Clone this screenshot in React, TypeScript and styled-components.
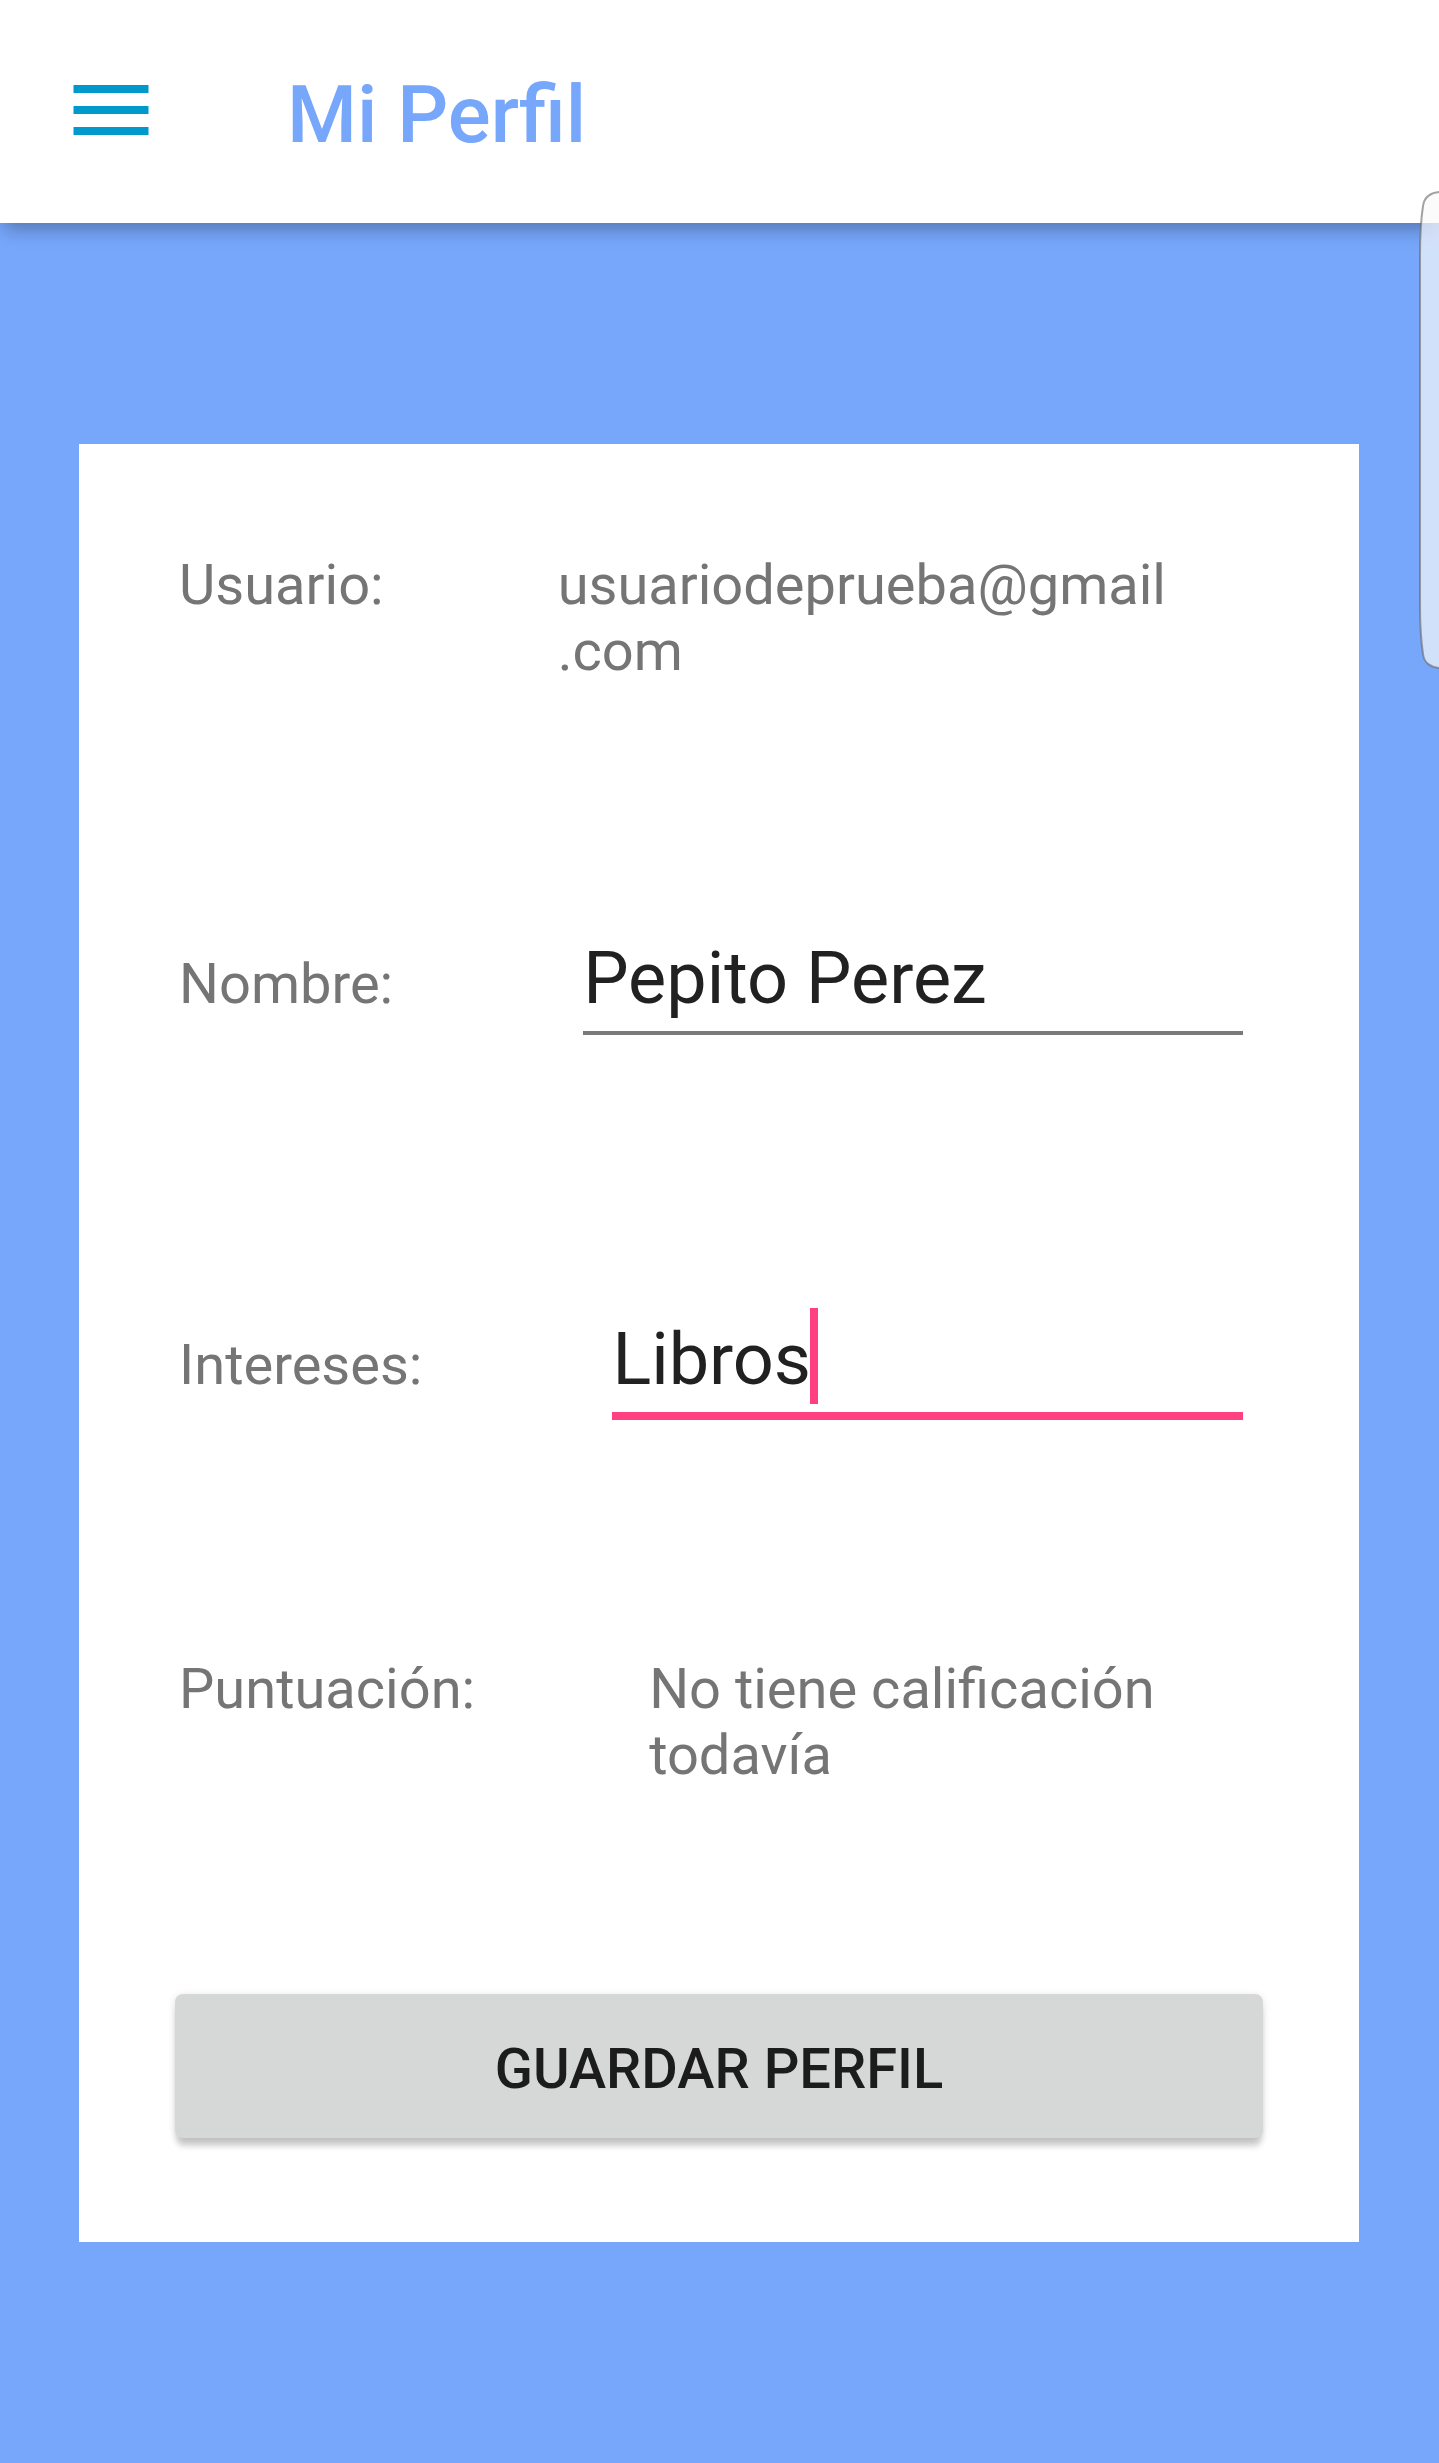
import React, { useLayoutEffect, useRef, useState } from 'react';
import styled, { createGlobalStyle } from 'styled-components';

const GlobalStyle = createGlobalStyle`
  * { box-sizing: border-box; }
  body { margin: 0; background: #77a7fb; font-family: Roboto, sans-serif; }
`;
const Page = styled.div`
  position: relative;
  min-height: 100vh;
  background: #77a7fb;
  overflow: hidden;
`;
const Toolbar = styled.header`
  display: flex;
  align-items: center;
  height: 223px;
  padding: 0 64px 3px;
  gap: 127px;
  background: #fff;
  box-shadow: 0 10px 18px -4px rgba(0, 0, 0, 0.3);
`;
const MenuButton = styled.button`
  display: flex;
  padding: 0;
  border: 0;
  background: none;
`;
const Title = styled.h1`
  margin: 0;
  padding-top: 10px;
  color: #77a7fb;
  font-size: 80px;
  line-height: 96px;
  font-weight: 500;
`;
const Card = styled.main`
  margin: 221px 80px 0 79px;
  padding: 108px 96px 104px;
  background: #fff;
`;
const Form = styled.form`
  display: flex;
  flex-direction: column;
`;
const Row = styled.div<{ $gap: number; $height: number }>`
  display: flex;
  align-items: flex-start;
  gap: ${(p) => p.$gap}px;
  min-height: ${(p) => p.$height}px;
  padding-left: 4px;
`;
const Label = styled.label`
  color: #757575;
  font-size: 56px;
  line-height: 66px;
`;
const Value = styled.output`
  flex: 1;
  color: #757575;
  font-size: 56px;
  line-height: 66px;
`;
const FieldBox = styled.div`
  position: relative;
  display: flex;
  flex: 1;
  min-width: 0;
  margin: -24px 20px 0 0;
`;
const Field = styled.input<{ $active?: boolean }>`
  box-sizing: content-box;
  width: 100%;
  min-width: 0;
  height: 102px;
  padding: 0 0 2px;
  border: 0;
  border-bottom: ${(p) => (p.$active ? '8px solid #ff4081' : '4px solid #7a7a7a')};
  border-radius: 0;
  outline: 0;
  background: transparent;
  caret-color: ${(p) => (p.$active ? 'transparent' : '#ff4081')};
  color: #212121;
  font: 400 72px/84px Roboto, sans-serif;
`;
const Caret = styled.span`
  position: absolute;
  top: 0;
  width: 8px;
  height: 96px;
  background: #ff4081;
  pointer-events: none;
`;
const SaveButton = styled.button`
  height: 144px;
  padding: 6px 0 0;
  border: 0;
  border-radius: 8px;
  background: #d6d8d7;
  color: #1c1c1c;
  box-shadow: 0 10px 6px -2px rgba(0, 0, 0, 0.18), 0 2px 8px rgba(0, 0, 0, 0.12);
  font: 500 56px/66px Roboto, sans-serif;
  text-transform: uppercase;
`;
const EdgeHandle = styled.svg`
  position: absolute;
  top: 191px;
  right: 0;
`;

function ActiveField({ id, value, onChange }: { id: string; value: string; onChange: (v: string) => void }) {
  const input = useRef<HTMLInputElement>(null);
  const [caretX, setCaretX] = useState(0);

  useLayoutEffect(() => {
    const context = document.createElement('canvas').getContext('2d');
    if (!context || !input.current) return;
    context.font = getComputedStyle(input.current).font;
    setCaretX(Math.floor(context.measureText(value).width));
  }, [value]);

  return (
    <FieldBox>
      <Field ref={input} id={id} $active value={value} onChange={(e) => onChange(e.target.value)} />
      <Caret aria-hidden="true" style={{ left: caretX }} />
    </FieldBox>
  );
}

export default function App() {
  const [name, setName] = useState('Pepito Perez');
  const [interests, setInterests] = useState('Libros');
  return (
    <Page>
      <GlobalStyle />
      <Toolbar>
        <MenuButton type="button" aria-label="Menú">
          <svg width="96" height="50" viewBox="0 0 96 50" fill="#0099cc">
            <path d="M9.500 0h75v8h-75zM9.500 21h75v8h-75zM9.500 42h75v8h-75z" />
          </svg>
        </MenuButton>
        <Title>Mi Perfil</Title>
      </Toolbar>
      <Card>
        <Form>
          <Row $gap={174} $height={399}>
            <Label htmlFor="user">Usuario:</Label>
            <Value id="user">usuariodeprueba@gmail<wbr />.com</Value>
          </Row>
          <Row $gap={190} $height={381}>
            <Label htmlFor="name">Nombre:</Label>
            <FieldBox>
              <Field id="name" value={name} onChange={(e) => setName(e.target.value)} />
            </FieldBox>
          </Row>
          <Row $gap={190} $height={324}>
            <Label htmlFor="interests">Intereses:</Label>
            <ActiveField id="interests" value={interests} onChange={setInterests} />
          </Row>
          <Row $gap={174} $height={338}>
            <Label htmlFor="score">Puntuación:</Label>
            <Value id="score">No tiene calificación todavía</Value>
          </Row>
          <SaveButton type="button">Guardar perfil</SaveButton>
        </Form>
      </Card>
      <EdgeHandle width="20" height="478" viewBox="0 0 20 478" aria-hidden="true">
        <path
          d="M22 1C12 1 5 6 4 15C2 28 1 45 1 65V413C1 433 2 450 4 463C5 472 12 477 22 477"
          fill="#fafafa"
          fillOpacity="0.7"
          stroke="#666"
          strokeOpacity="0.6"
          strokeWidth="2"
        />
      </EdgeHandle>
    </Page>
  );
}
